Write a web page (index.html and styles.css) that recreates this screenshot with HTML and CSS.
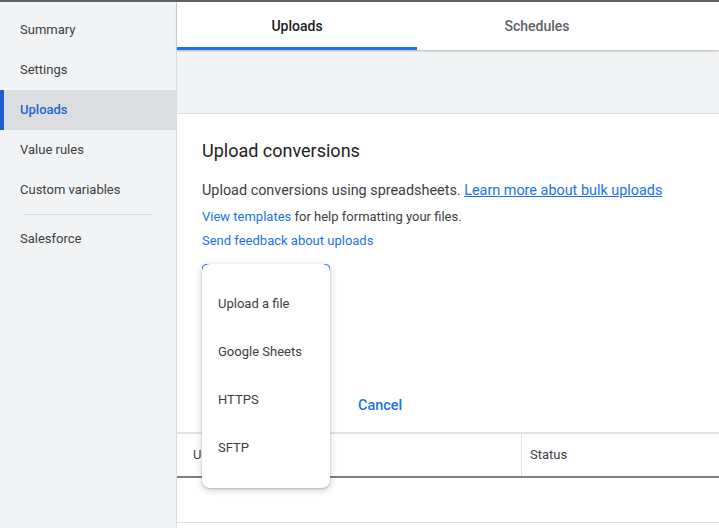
FILE: index.html
```html
<!DOCTYPE html>
<html>
<head>
<meta charset="utf-8">
<link rel="stylesheet" href="styles.css">
</head>
<body>
<div class="topbar"></div>
<div class="app">
  <nav class="sidebar">
    <div class="nav-item">Summary</div>
    <div class="nav-item">Settings</div>
    <div class="nav-item active">Uploads</div>
    <div class="nav-item">Value rules</div>
    <div class="nav-item">Custom variables</div>
    <div class="nav-divider"></div>
    <div class="nav-item">Salesforce</div>
  </nav>
  <main class="main">
    <div class="tabs">
      <div class="tab active">Uploads</div>
      <div class="tab">Schedules</div>
    </div>
    <div class="banner"></div>
    <section class="card">
      <div class="card-body">
        <h1 class="title">Upload conversions</h1>
        <p class="lead">Upload conversions using spreadsheets. <a class="link underline">Learn more about bulk uploads</a></p>
        <p class="line"><a class="link">View templates</a> for help formatting your files.</p>
        <p class="line"><a class="link">Send feedback about uploads</a></p>
        <div class="upload-wrap">
          <div class="upload-btn"></div>
          <div class="menu">
            <div class="menu-item">Upload a file</div>
            <div class="menu-item">Google Sheets</div>
            <div class="menu-item">HTTPS</div>
            <div class="menu-item">SFTP</div>
          </div>
        </div>
        <div class="actions">
          <span class="cancel">Cancel</span>
        </div>
      </div>
      <div class="table">
        <div class="thead">
          <div class="th th-first">Upload</div>
          <div class="th th-status">Status</div>
        </div>
        <div class="tbody"></div>
      </div>
    </section>
  </main>
</div>
</body>
</html>
```
FILE: styles.css
```css
* { box-sizing: border-box; }
html, body {
  margin: 0;
  padding: 0;
  width: 719px;
  height: 528px;
  overflow: hidden;
  font-family: Roboto, "Liberation Sans", Arial, sans-serif;
  background: #f1f3f4;
  color: #3c4043;
}
.topbar {
  height: 2px;
  background: #5f6368;
}
.app {
  display: flex;
  height: 526px;
}
.sidebar {
  width: 177px;
  flex: none;
  background: #f1f3f4;
  border-right: 1px solid #dadce0;
  padding-top: 8px;
}
.nav-item {
  height: 40px;
  line-height: 40px;
  font-size: 13px;
  color: #3c4043;
  border-left: 4px solid transparent;
  padding-left: 16px;
}
.nav-item.active {
  background: #dcdddf;
  border-left-color: #1a5fcf;
  color: #1967d2;
  font-weight: 500;
}
.nav-divider {
  height: 1px;
  background: #dadce0;
  margin: 4px 24px 4px 24px;
}
.main {
  flex: 1;
  display: flex;
  flex-direction: column;
  min-width: 0;
}
.tabs {
  display: flex;
  height: 48px;
  background: #fff;
  box-shadow: 0 1px 2px rgba(60,64,67,0.35);
  position: relative;
  z-index: 1;
}
.tab {
  width: 240px;
  height: 48px;
  text-align: center;
  padding-top: 3px;
  line-height: 42px;
  font-size: 14px;
  font-weight: 500;
  color: #5f6368;
  border-bottom: 3px solid transparent;
}
.tab.active {
  color: #202124;
  border-bottom-color: #1a73e8;
}
.banner {
  height: 64px;
  background: #f1f3f4;
  border-bottom: 1px solid #dadce0;
}
.card {
  background: #fff;
  flex: 1;
}
.card-body {
  padding: 25px 25px 0 25px;
}
.title {
  margin: 0;
  font-size: 18px;
  font-weight: 400;
  line-height: 24px;
  color: #202124;
}
.lead {
  margin: 18px 0 4px 0;
  font-size: 14.4px;
  line-height: 20px;
  color: #3c4043;
}
.line {
  margin: 0;
  font-size: 13px;
  line-height: 24px;
  color: #3c4043;
}
.link {
  color: #1a73e8;
  text-decoration: none;
}
.link.underline {
  text-decoration: underline;
}
.upload-wrap {
  position: relative;
  margin-top: 11px;
  height: 36px;
}
.upload-btn {
  width: 128px;
  height: 36px;
  border: 1px solid #1a73e8;
  border-radius: 4px;
}
.menu {
  position: absolute;
  left: 0;
  top: 0;
  width: 128px;
  padding: 16px 0;
  background: #fff;
  border-radius: 8px;
  box-shadow: 0 2px 6px 2px rgba(60,64,67,0.15), 0 1px 2px rgba(60,64,67,0.3);
  z-index: 5;
}
.menu-item {
  height: 48px;
  line-height: 48px;
  padding-left: 16px;
  font-size: 13px;
  color: #3c4043;
}
.actions {
  margin-top: 87px;
  height: 36px;
  display: flex;
  align-items: center;
  padding-left: 156px;
}
.cancel {
  font-size: 14.4px;
  font-weight: 500;
  color: #1a73e8;
}
.table {
  margin-top: 9px;
  border-top: 2px solid #e3e3e3;
}
.thead {
  display: flex;
  height: 44px;
  border-bottom: 2px solid #808080;
}
.th {
  font-size: 13px;
  line-height: 42px;
  color: #3c4043;
}
.th-first {
  width: 345px;
  padding-left: 16px;
  border-right: 1px solid #e0e0e0;
}
.th-status {
  padding-left: 8px;
}
.tbody {
  height: 45px;
  border-bottom: 1px solid #e0e0e0;
}
```
